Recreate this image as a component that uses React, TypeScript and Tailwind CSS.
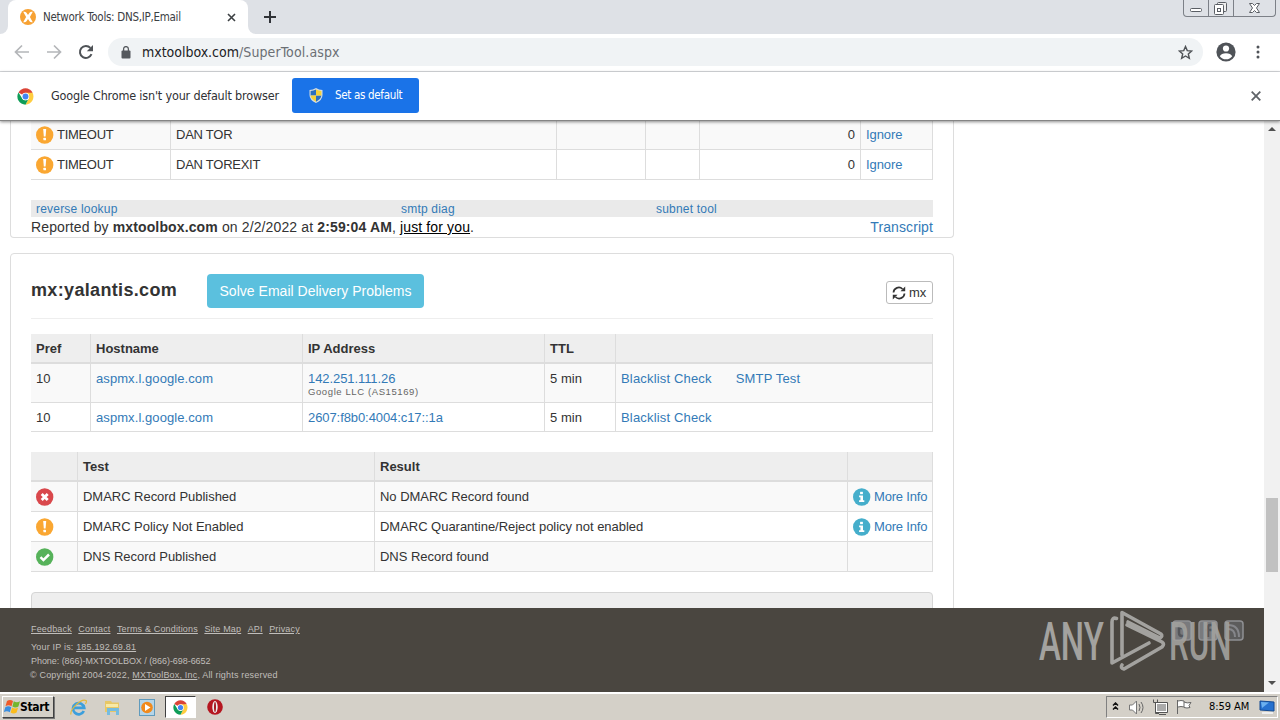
import type { ReactNode } from "react";

const links = "text-[#337ab7]";

function Status({ kind }: { kind: "warn" | "error" | "ok" | "info" }) {
  const fill = { warn: "#faa732", error: "#d9484c", ok: "#56b25a", info: "#45aecb" }[kind];
  return (
    <svg className="h-[18px] w-[18px] shrink-0" viewBox="0 0 18 18">
      <circle cx="8.700" cy="9" r="8.700" fill={fill} />
      {kind === "warn" && (
        <>
          <path d="M7.200 3h3l-.6 7.600H7.800z" fill="#fff" />
          <rect x="7.400" y="11.700" width="2.600" height="2.600" rx=".6" fill="#fff" />
        </>
      )}
      {kind === "error" && <path d="M5.700 6l6 6M11.700 6l-6 6" stroke="#fff" strokeWidth="2.800" />}
      {kind === "ok" && <path d="M4.500 9.200l2.900 2.900 5.600-5.600" stroke="#fff" strokeWidth="2.500" fill="none" />}
      {kind === "info" && (
        <>
          <rect x="7.100" y="3.800" width="2.800" height="2.400" fill="#fff" />
          <path d="M6.100 7.500h3.900v4.800h1.300v1.700H6.100v-1.700h1.300V9.200H6.100z" fill="#fff" />
        </>
      )}
    </svg>
  );
}

function Chrome({ className }: { className: string }) {
  return (
    <svg className={className} viewBox="0 0 48 48">
      <path d="M24 24 4.100 12.500A23 23 0 0 1 43.900 12.500Z" fill="#db4437" />
      <path d="M24 13.500h19.900A23 23 0 0 1 24 47l9.100-17.700Z" fill="#ffcd40" />
      <path d="M4.100 12.500 14.900 29.300A10.500 10.500 0 0 0 33.100 29.300L24 47A23 23 0 0 1 4.100 12.500Z" fill="#0f9d58" />
      <circle cx="24" cy="24" r="10.500" fill="#fff" />
      <circle cx="24" cy="24" r="8.300" fill="#4285f4" />
    </svg>
  );
}

function Cell({ children, className = "" }: { children?: ReactNode; className?: string }) {
  return <div className={`border-r border-b border-[#ddd] px-[5px] ${className}`}>{children}</div>;
}

function TabStrip() {
  return (
    <div className="flex h-[34px] bg-[#dee1e6]">
      <div className="flex w-2 items-end bg-white">
        <div className="h-full w-2 rounded-br-lg bg-[#dee1e6]" />
      </div>
      <div className="bg-[#dee1e6]">
        <div className="flex h-[34px] w-[240px] items-center rounded-t-lg bg-white pl-3">
          <svg className="h-4 w-4" viewBox="0 0 16 16">
            <circle cx="8" cy="8" r="8" fill="#f7a234" />
            <path d="M3.200 2.800q2.200-.6 3.300 1L8 6l1.500-2.200q1.100-1.600 3.300-1L9.900 8l2.900 5.200q-2.200.6-3.300-1L8 10l-1.500 2.200q-1.100 1.600-3.300 1L6.100 8z" fill="#fff" />
          </svg>
          <span className="mt-px ml-[7px] w-[176px] text-[11.500px] tracking-[-0.280px] text-[#3c4043]">Network Tools: DNS,IP,Email</span>
          <svg className="ml-[8px] h-[9px] w-[9px]" viewBox="0 0 9 9">
            <path d="M1 1l7 7M8 1L1 8" stroke="#3c4043" strokeWidth="1.600" />
          </svg>
        </div>
      </div>
      <div className="w-2 bg-white">
        <div className="h-full w-2 rounded-bl-lg bg-[#dee1e6]" />
      </div>
      <svg className="mt-[11px] ml-[8px] h-3 w-3" viewBox="0 0 12 12">
        <path d="M6 0v12M0 6h12" stroke="#303338" strokeWidth="2" />
      </svg>
      <div className="mr-1 ml-auto flex h-[17px] rounded-b-[4px] border border-t-0 border-[#7c8087] bg-[#dee1e6]">
        <div className="w-[25px] border-r border-[#7c8087]">
          <svg className="h-4 w-6" viewBox="0 0 24 16">
            <rect x="6.500" y="8.500" width="11" height="3" rx="1" fill="#fff" stroke="#5a5e64" />
          </svg>
        </div>
        <div className="w-[25px] border-r border-[#7c8087]">
          <svg className="h-4 w-6" viewBox="0 0 24 16">
            <rect x="8.500" y="2.500" width="9" height="9" rx="1" fill="#eee" stroke="#5a5e64" />
            <rect x="5.500" y="4.500" width="9" height="10" rx="1" fill="#fff" stroke="#5a5e64" />
            <rect x="8.500" y="8.500" width="3" height="3" fill="#fff" stroke="#5a5e64" />
          </svg>
        </div>
        <div className="w-[41px]">
          <svg className="h-4 w-[41px]" viewBox="0 0 41 16">
            <path d="M15.500 3.500h3l2 2 2-2h3l-3 4.500 3 4.500h-3l-2-2-2 2h-3l3-4.500z" fill="#fff" stroke="#5a5e64" />
          </svg>
        </div>
      </div>
    </div>
  );
}

function Toolbar() {
  return (
    <div className="flex h-[38px] items-center border-b border-[#d9dbde] bg-white pb-px">
      <svg className="ml-[14px] h-4 w-4" viewBox="0 0 16 16">
        <path d="M15 8H2M8 1.500L1.500 8 8 14.500" fill="none" stroke="#b4b6b9" strokeWidth="1.700" />
      </svg>
      <svg className="ml-4 h-4 w-4" viewBox="0 0 16 16">
        <path d="M1 8h13M8 1.500L14.500 8 8 14.500" fill="none" stroke="#b4b6b9" strokeWidth="1.700" />
      </svg>
      <svg className="ml-4 h-4 w-4" viewBox="0 0 16 16">
        <path d="M13.500 10.200A6 6 0 1 1 12.400 3.900" fill="none" stroke="#4f5357" strokeWidth="2" />
        <path d="M15 1v6.200H8.800z" fill="#4f5357" />
      </svg>
      <div className="ml-[14px] flex h-7 w-[1095px] items-center rounded-full bg-[#f0f3f5] pr-[10px] pl-[13px]">
        <svg className="h-[13px] w-[10px]" viewBox="0 0 10 13">
          <rect x=".5" y="4.500" width="9" height="8" rx="1" fill="#55595e" />
          <path d="M2.600 5V3a2.400 2.400 0 0 1 4.800 0v2" fill="none" stroke="#55595e" strokeWidth="1.300" />
        </svg>
        <span className="ml-[11px] text-[14px] tracking-[-0.020px] whitespace-nowrap text-[#202124]">
          mxtoolbox.com<span className="tracking-[0.100px] text-[#6b6f74]">/SuperTool.aspx</span>
        </span>
        <svg className="ml-auto h-[15px] w-[15px]" viewBox="0 0 24 24">
          <path d="M12 2.500l2.800 6.500 7.100.6-5.400 4.700 1.600 6.900L12 17.600l-6.100 3.600 1.600-6.900L2.100 9.600 9.200 9z" fill="none" stroke="#4f5357" strokeWidth="2.300" />
        </svg>
      </div>
      <svg className="ml-[13px] h-5 w-5" viewBox="0 0 20 20">
        <circle cx="10" cy="10" r="9.600" fill="#4f5358" />
        <circle cx="10" cy="6.500" r="3.100" fill="#fff" />
        <path d="M3.800 14.200Q5.300 11.300 10 11.300t6.200 2.900Q14 17.300 10 17.300t-6.200-3.100z" fill="#fff" />
      </svg>
      <svg className="ml-[20px] h-[14px] w-1" viewBox="0 0 4 14">
        <circle cx="2" cy="2" r="1.500" fill="#4f5358" />
        <circle cx="2" cy="7" r="1.500" fill="#4f5358" />
        <circle cx="2" cy="12" r="1.500" fill="#4f5358" />
      </svg>
    </div>
  );
}

function InfoBar() {
  return (
    <div className="relative z-10 flex h-[49px] items-center border-b border-[#858585] bg-white shadow-[0_1px_3px_rgba(0,0,0,0.45)]">
      <Chrome className="ml-[17px] h-[17px] w-[17px]" />
      <span className="ml-[17px] w-[228px] text-[12.500px] tracking-[-0.180px] whitespace-nowrap text-[#303134]">Google Chrome isn't your default browser</span>
      <div className="mb-[2px] ml-[13px] flex h-[35px] w-[127px] items-center rounded-[3px] bg-[#1a73e8] pl-[17px] text-[11.500px] text-white">
        <svg className="h-[15px] w-[14px]" viewBox="0 0 14 15">
          <path d="M7 0q3 2 6.500 2v5q0 5-6.500 8Q.5 12 .5 7V2Q4 2 7 0z" fill="#d5dde0" />
          <path d="M7 1.500v6H1.600V3Q4.500 2.900 7 1.500zM7 7.500h5.400q-.4 3.700-5.400 6.200z" fill="#2a6fc0" />
          <path d="M7 1.500v6h5.400V3Q9.500 2.900 7 1.500zM7 7.500H1.600q.4 3.700 5.400 6.200z" fill="#f4d13a" />
        </svg>
        <span className="mt-[2px] ml-[12px] tracking-[-0.320px] whitespace-nowrap">Set as default</span>
      </div>
      <svg className="mr-[19px] ml-auto h-[10px] w-[10px]" viewBox="0 0 10 10">
        <path d="M.7.7l8.600 8.600M9.300.7L.7 9.300" stroke="#5f6368" strokeWidth="1.800" />
      </svg>
    </div>
  );
}

function TimeoutRow({ name, shade }: { name: string; shade: string }) {
  return (
    <div className={`grid h-[30px] grid-cols-[140px_386px_89px_54px_161px_72px] leading-[29px] ${shade}`}>
      <Cell className="flex gap-[3px]">
        <div className="pt-[6px]"><Status kind="warn" /></div>
        <span className="tracking-[-0.300px]">TIMEOUT</span>
      </Cell>
      <Cell className="tracking-[-0.250px]">{name}</Cell>
      <Cell />
      <Cell />
      <Cell className="text-right">0</Cell>
      <Cell className={`tracking-[-0.100px] ${links}`}>Ignore</Cell>
    </div>
  );
}

function HostRow({ ip, owner, smtp, className }: { ip: string; owner?: string; smtp?: boolean; className: string }) {
  return (
    <div className={`grid grid-cols-[60px_212px_242px_71px_317px] ${className}`}>
      <Cell>10</Cell>
      <Cell className={`tracking-[0.080px] ${links}`}>aspmx.l.google.com</Cell>
      <Cell className={`tracking-[-0.080px] ${links}`}>
        <div>{ip}</div>
        {owner && <div className="-mt-[8px] text-[9.500px] leading-[12px] tracking-[0.600px] text-[#666]">{owner}</div>}
      </Cell>
      <Cell className="tracking-[0.050px]">5 min</Cell>
      <Cell className={`tracking-[0.170px] ${links}`}>
        <span>Blacklist Check</span>
        {smtp && <span className="ml-6">SMTP Test</span>}
      </Cell>
    </div>
  );
}

function TestRow({ kind, test, result, info, shade }: { kind: "warn" | "error" | "ok"; test: string; result: string; info?: boolean; shade: string }) {
  return (
    <div className={`grid h-[30px] grid-cols-[47px_297px_473px_85px] leading-[29px] ${shade}`}>
      <Cell className="pt-[6px]"><Status kind={kind} /></Cell>
      <Cell className="tracking-[-0.030px]">{test}</Cell>
      <Cell className="tracking-[-0.030px]">{result}</Cell>
      <Cell className={`flex gap-[3px] whitespace-nowrap ${links}`}>
        {info && (
          <>
            <div className="pt-[6px]"><Status kind="info" /></div>
            <span className="tracking-[-0.180px]">More Info</span>
          </>
        )}
      </Cell>
    </div>
  );
}

function Results() {
  return (
    <div className="h-[487px] w-[944px] shrink-0 overflow-hidden text-[13px] text-[#333]">
      <div className="h-[118px] rounded-b border border-t-0 border-[#ddd] px-5">
        <div className="-mt-px">
          <TimeoutRow name="DAN TOR" shade="bg-[#f9f9f9]" />
          <TimeoutRow name="DAN TOREXIT" shade="bg-white" />
        </div>
        <div className={`mt-5 grid h-[17px] grid-cols-[365px_255px_1fr] bg-[#eaeaea] px-[5px] text-[12px] leading-[18px] tracking-[0.200px] ${links}`}>
          <span>reverse lookup</span>
          <span>smtp diag</span>
          <span>subnet tool</span>
        </div>
        <div className="flex justify-between text-[14px] leading-[20px]">
          <span className="tracking-[0.130px]">
            Reported by <b>mxtoolbox.com</b> on 2/2/2022 at <b>2:59:04 AM</b>, <u className="text-black">just for you</u>.
          </span>
          <span className={`tracking-[0.100px] ${links}`}>Transcript</span>
        </div>
      </div>
      <div className="mt-[15px] h-[400px] rounded border border-[#ddd] px-5">
        <div className="flex h-[65px] items-center border-b border-[#eee] pt-[10px]">
          <h1 className="-mt-[2px] w-[176px] text-[18px] font-bold tracking-[0.340px] whitespace-nowrap">mx:yalantis.com</h1>
          <div className="flex h-[34px] w-[217px] items-center justify-center rounded bg-[#5bc0de] text-[14px] tracking-[0.020px] text-white">Solve Email Delivery Problems</div>
          <div className="mt-[3px] ml-auto flex h-[23px] w-[47px] items-center gap-1 rounded-[3px] border border-[#bbb] pl-[5px]">
            <svg className="h-[14px] w-[14px]" viewBox="0 0 14 14">
              <path d="M1.500 6.500A5.300 5.300 0 0 1 10.500 3M12.500 7.500A5.300 5.300 0 0 1 3.500 11" fill="none" stroke="#333" strokeWidth="1.700" />
              <path d="M13.200.5v4.700H8.500zM.8 13.500V8.800h4.700z" fill="#333" />
            </svg>
            <span className="-ml-px">mx</span>
          </div>
        </div>
        <div className="mt-[15px]">
          <div className="grid h-[30px] grid-cols-[60px_212px_242px_71px_317px] border-b border-[#ddd] bg-[#eee] leading-[26px] font-bold *:pt-[2px]">
            <Cell>Pref</Cell>
            <Cell>Hostname</Cell>
            <Cell>IP Address</Cell>
            <Cell>TTL</Cell>
            <Cell />
          </div>
          <HostRow ip="142.251.111.26" owner="Google LLC (AS15169)" smtp className="h-[39px] bg-[#f9f9f9] leading-[30px]" />
          <HostRow ip="2607:f8b0:4004:c17::1a" className="h-[29px] leading-[26px] *:pt-[2px]" />
        </div>
        <div className="mt-5">
          <div className="grid h-[30px] grid-cols-[47px_297px_473px_85px] border-b border-[#ddd] bg-[#eee] leading-[26px] font-bold *:pt-[2px]">
            <Cell />
            <Cell>Test</Cell>
            <Cell>Result</Cell>
            <Cell />
          </div>
          <TestRow kind="error" test="DMARC Record Published" result="No DMARC Record found" info shade="bg-[#f9f9f9]" />
          <TestRow kind="warn" test="DMARC Policy Not Enabled" result="DMARC Quarantine/Reject policy not enabled" info shade="bg-white" />
          <TestRow kind="ok" test="DNS Record Published" result="DNS Record found" shade="bg-[#f9f9f9]" />
        </div>
        <div className="mt-5 h-10 rounded border border-[#d5d5d5] bg-[#eee]" />
      </div>
    </div>
  );
}

function Watermark() {
  return (
    <div className="absolute top-0 left-[1036px] flex h-[66px] w-[212px] text-[#a3a29f]">
      <div className="absolute top-[12px] left-[136px] flex gap-[6px]">
        <svg className="h-[21px] w-5" viewBox="0 0 20 21">
          <rect x="1" y="1" width="18" height="19" rx="3" fill="#797a7d" stroke="#8f9093" strokeWidth="1.500" />
          <path d="M7 4v9q0 3 3 3h3M7 8h6" fill="none" stroke="#55565a" strokeWidth="2.500" />
        </svg>
        <svg className="h-[21px] w-5" viewBox="0 0 20 21">
          <rect x="1" y="1" width="18" height="19" rx="3" fill="#797a7d" stroke="#8f9093" strokeWidth="1.500" />
          <path d="M14 5h-2q-2 0-2 3v9M7 10h7" fill="none" stroke="#55565a" strokeWidth="2.500" />
        </svg>
        <svg className="h-[21px] w-5" viewBox="0 0 20 21">
          <rect x="1" y="1" width="18" height="19" rx="3" fill="#5c5c5c" stroke="#8f9093" strokeWidth="1.500" />
          <path d="M4 9q7 0 7 8M4 5q11 0 11 12" fill="none" stroke="#85868a" strokeWidth="2" />
        </svg>
      </div>
      <span className="absolute top-[3px] left-[3px] origin-left scale-x-[0.620] font-[Roboto,sans-serif] text-[53px] leading-[62px] font-medium">ANY</span>
      <svg className="absolute top-0 left-[72px] h-[66px] w-[58px]" viewBox="0 0 58 66">
        <path d="M8.500 10.500Q4 9 4 14V55L41 35M14 47V4.500L53 26Q55 28 52 30L20 14M14 57Q12 60 16 61L54 39Q57 36 54 34L19 17" fill="none" stroke="#a3a29f" strokeWidth="3.600" strokeLinecap="round" strokeLinejoin="round" />
      </svg>
      <span className="absolute top-[3px] left-[133px] origin-left scale-x-[0.590] font-[Roboto,sans-serif] text-[53px] leading-[62px] font-medium opacity-90">RUN</span>
    </div>
  );
}

function Footer() {
  return (
    <div className="relative h-[84px] w-[1264px] bg-[#4a4640] pt-[14px] pl-[31px] text-[9px] leading-[14px] text-[#c0bebb]">
      <div className="flex gap-[6.500px] tracking-[0.160px] underline">
        <span>Feedback</span>
        <span>Contact</span>
        <span>Terms &amp; Conditions</span>
        <span>Site Map</span>
        <span>API</span>
        <span>Privacy</span>
      </div>
      <div className="mt-1 tracking-[0.180px]">Your IP is: <u>185.192.69.81</u></div>
      <div className="tracking-[-0.050px]">Phone: (866)-MXTOOLBOX / (866)-698-6652</div>
      <div className="-ml-px tracking-[0.180px]">© Copyright 2004-2022, <u>MXToolBox, Inc</u>, All rights reserved</div>
      <Watermark />
    </div>
  );
}

function Taskbar() {
  return (
    <div className="flex h-7 items-center border-t-2 border-white bg-[#d4d0c8] text-black">
      <div className="ml-[2px] flex h-[22px] w-[52px] items-center border border-t-white border-r-[#404040] border-b-[#404040] border-l-white pl-px text-[12px] font-bold shadow-[1px_1px_0_#777]">
        <svg className="h-4 w-[17px] shrink-0" viewBox="0 0 17 16">
          <path d="M3 2q3-2 6 0L7.500 7.200q-3-1.800-6 0z" fill="#ef5a29" />
          <path d="M9.800 2.300q3 1.800 6.200 0l-1.600 5.200q-3 1.800-6 0z" fill="#73b62d" />
          <path d="M1.300 8.200q3-1.800 6 0L5.800 13.200q-3-1.800-6 0z" fill="#3a8ee0" />
          <path d="M8.100 8.500q3 1.800 6 0l-1.500 5q-3 1.800-6 0z" fill="#fbbc1c" />
        </svg>
        <span className="-mt-px -ml-px tracking-[-0.300px]">Start</span>
      </div>
      <svg className="ml-[16px] h-[17px] w-[17px]" viewBox="0 0 17 17">
        <path d="M13.800 12A5.600 5.600 0 1 1 14.200 8.800H4.500" fill="none" stroke="#3c9fdc" strokeWidth="2.700" />
        <path d="M1 15.500C-.5 11 11-1 16 1.500q1 1-.5 3.500" fill="none" stroke="#e2b93b" strokeWidth="1.200" />
      </svg>
      <svg className="ml-[17px] h-[17px] w-[17px]" viewBox="0 0 17 17">
        <path d="M1 2h6l1 1.500h7V13H1z" fill="#e7c767" />
        <path d="M2 5h12v3H2z" fill="#f8e9a6" />
        <path d="M3 9h12v7h-3v-4H6v4H3z" fill="#76bce0" />
      </svg>
      <svg className="ml-[18px] h-[17px] w-4" viewBox="0 0 16 17">
        <rect x=".5" y=".5" width="15" height="16" fill="#b5d5e8" stroke="#609bbd" />
        <circle cx="8" cy="8.500" r="5.800" fill="#f18a1c" />
        <path d="M6 5l5.500 3.500L6 12z" fill="#fff" />
      </svg>
      <div className="ml-[10px] flex h-[22px] w-[31px] items-center justify-center border border-t-[#404040] border-r-white border-b-white border-l-[#404040] bg-white">
        <Chrome className="h-[15px] w-[15px]" />
      </div>
      <svg className="ml-[11px] h-4 w-4" viewBox="0 0 16 16">
        <circle cx="8" cy="8" r="7.800" fill="#b51620" />
        <ellipse cx="8" cy="8" rx="2.700" ry="6" fill="#eee" />
        <ellipse cx="8" cy="8" rx="1" ry="5" fill="#a51b22" />
      </svg>
      <div className="mr-[2px] ml-auto flex h-[22px] w-[172px] items-center border border-t-[#808080] border-r-white border-b-white border-l-[#808080]">
        <svg className="mb-[2px] ml-[5px] h-[8px] w-[7px] shrink-0" viewBox="0 0 7 8">
          <path d="M1 3.500L3.500 1 6 3.500M1 7.500L3.500 5 6 7.500" fill="none" stroke="#111" strokeWidth="1.500" />
        </svg>
        <svg className="ml-[9px] h-[17px] w-[18px]" viewBox="0 0 18 17">
          <path d="M1.500 6h3l4-4v13l-4-4h-3z" fill="#fff" stroke="#777" />
          <path d="M11 5q2 3.500 0 7M13 3q4 5.500 0 11" fill="none" stroke="#666" />
        </svg>
        <svg className="ml-[6px] h-4 w-4" viewBox="0 0 16 16">
          <rect x="4.500" y="4.500" width="10" height="8" fill="#aaa" stroke="#fff" />
          <path d="M3.500 3.500h12v10h-12zM7 15.500h7" fill="none" stroke="#555" />
          <path d="M1.500.5v3h4v-3M3.500 3.500v11H7" fill="none" stroke="#555" />
        </svg>
        <svg className="ml-[8px] h-4 w-4" viewBox="0 0 16 16">
          <path d="M1.500 1v14M2 2q3-1 6 0v6q-3-1-6 0M8 3q3 1.500 7 .5l-2 3 1 2q-3 1-6 0" fill="#fff" stroke="#666" />
        </svg>
        <span className="ml-[17px] text-[11px] tracking-[-0.050px] whitespace-nowrap">8:59 AM</span>
        <svg className="ml-[10px] h-4 w-4" viewBox="0 0 16 16">
          <path d="M1 2l14 1v9L1 11z" fill="#2671cf" stroke="#144b93" />
          <path d="M2 3l8 .5L3 9z" fill="#6bb0ef" />
          <path d="M3 13h11v2H3z" fill="#eee" />
        </svg>
      </div>
    </div>
  );
}

export default function App() {
  return (
    <div className="flex h-[720px] w-[1280px] flex-col overflow-hidden bg-white font-['DejaVu_Sans_Condensed','DejaVu_Sans','Noto_Sans',sans-serif]">
      <TabStrip />
      <Toolbar />
      <InfoBar />
      <div className="flex h-[571px] shrink-0">
        <div className="w-[1264px] font-['Liberation_Sans',Arial,sans-serif]">
          <div className="h-[487px] overflow-hidden pl-[10px]">
            <Results />
          </div>
          <Footer />
        </div>
        <div className="flex w-4 flex-col bg-[#f1f1f1]">
          <svg className="h-4 w-4" viewBox="0 0 16 16"><path d="M4 10l4-4 4 4z" fill="#505050" /></svg>
          <div className="mt-[361px] ml-[2px] h-[74px] w-3 bg-[#c1c1c1]" />
          <svg className="mt-auto h-4 w-4" viewBox="0 0 16 16"><path d="M4 5l4 4 4-4z" fill="#505050" /></svg>
        </div>
      </div>
      <Taskbar />
    </div>
  );
}
